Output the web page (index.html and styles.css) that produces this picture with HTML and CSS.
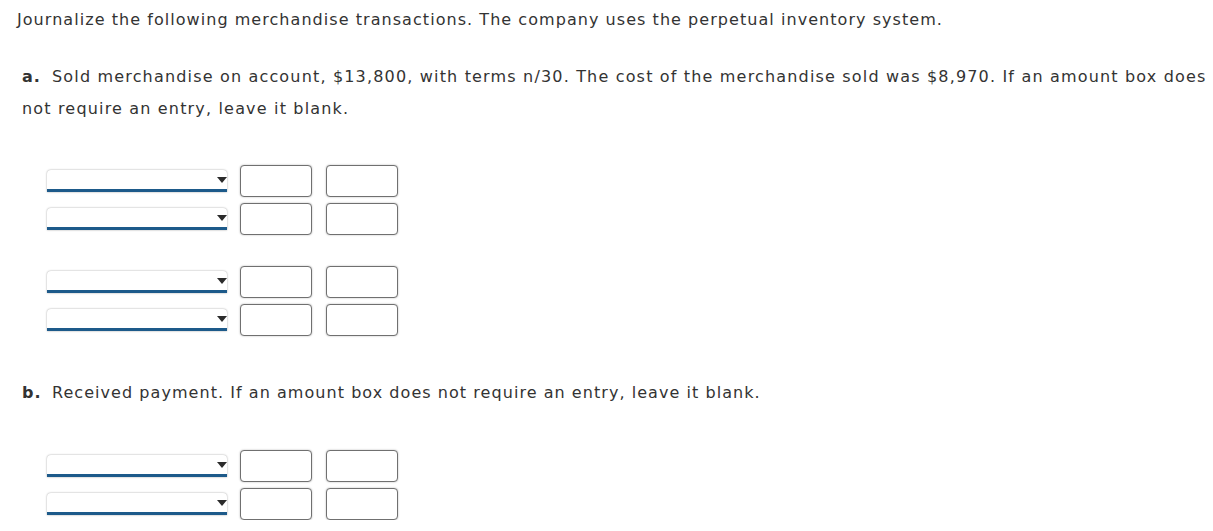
FILE: index.html
```html
<!DOCTYPE html>
<html>
<head>
<meta charset="utf-8">
<link rel="stylesheet" href="styles.css">
</head>
<body>
<div class="page">
  <p class="intro">Journalize the following merchandise transactions. The company uses the perpetual inventory system.</p>
  <p class="question qa"><b class="label">a.</b>Sold merchandise on account, $13,800, with terms n/30. The cost of the merchandise sold was $8,970. If an amount box does not require an entry, leave it blank.</p>
  <div class="entry-set">
    <div class="row"><div class="select"><span class="arrow"></span></div><div class="amount"></div><div class="amount"></div></div>
    <div class="row"><div class="select"><span class="arrow"></span></div><div class="amount"></div><div class="amount"></div></div>
  </div>
  <div class="entry-set gap-small">
    <div class="row"><div class="select"><span class="arrow"></span></div><div class="amount"></div><div class="amount"></div></div>
    <div class="row"><div class="select"><span class="arrow"></span></div><div class="amount"></div><div class="amount"></div></div>
  </div>
  <p class="question qb"><b class="label">b.</b>Received payment. If an amount box does not require an entry, leave it blank.</p>
  <div class="entry-set last">
    <div class="row"><div class="select"><span class="arrow"></span></div><div class="amount"></div><div class="amount"></div></div>
    <div class="row"><div class="select"><span class="arrow"></span></div><div class="amount"></div><div class="amount"></div></div>
  </div>
</div>
</body>
</html>
```

FILE: styles.css
```css
html, body {
  margin: 0;
  padding: 0;
  background: #fff;
}
.page {
  font-family: "DejaVu Sans", Verdana, sans-serif;
  font-size: 16px;
  letter-spacing: 1.05px;
  color: #333;
  width: 1213px;
}
.intro {
  margin: 8px 0 0 17px;
  line-height: 24px;
}
.question {
  margin: 29px 0 0 22px;
  line-height: 32px;
  width: 1191px;
}
.qa {
  letter-spacing: 1.17px;
}
.label {
  font-weight: bold;
  display: inline-block;
  width: 30px;
  letter-spacing: 1.05px;
}
.qb {
  margin-top: 41px;
}
.entry-set {
  margin-top: 40px;
  display: flex;
  flex-direction: column;
  gap: 6px;
}
.entry-set.gap-small {
  margin-top: 31px;
}
.entry-set.last {
  margin-top: 41px;
}
.row {
  display: flex;
  align-items: center;
  height: 32px;
  padding-left: 47px;
}
.select {
  position: relative;
  width: 180px;
  height: 19px;
  background: #fff;
  border-radius: 4px 4px 0 0;
  box-shadow: 0 0 2px rgba(0, 0, 0, 0.4);
  border-bottom: 3px solid #1d5a8a;
  margin-right: 13px;
}
.arrow {
  position: absolute;
  right: 0;
  top: 7px;
  width: 0;
  height: 0;
  border-left: 5.5px solid transparent;
  border-right: 5.5px solid transparent;
  border-top: 6px solid #2b2b2b;
}
.amount {
  width: 70px;
  height: 30px;
  border: 1px solid #707070;
  border-radius: 4px;
  box-shadow: 0 0 2px rgba(0, 0, 0, 0.3);
  background: #fff;
  margin-right: 14px;
}
```
